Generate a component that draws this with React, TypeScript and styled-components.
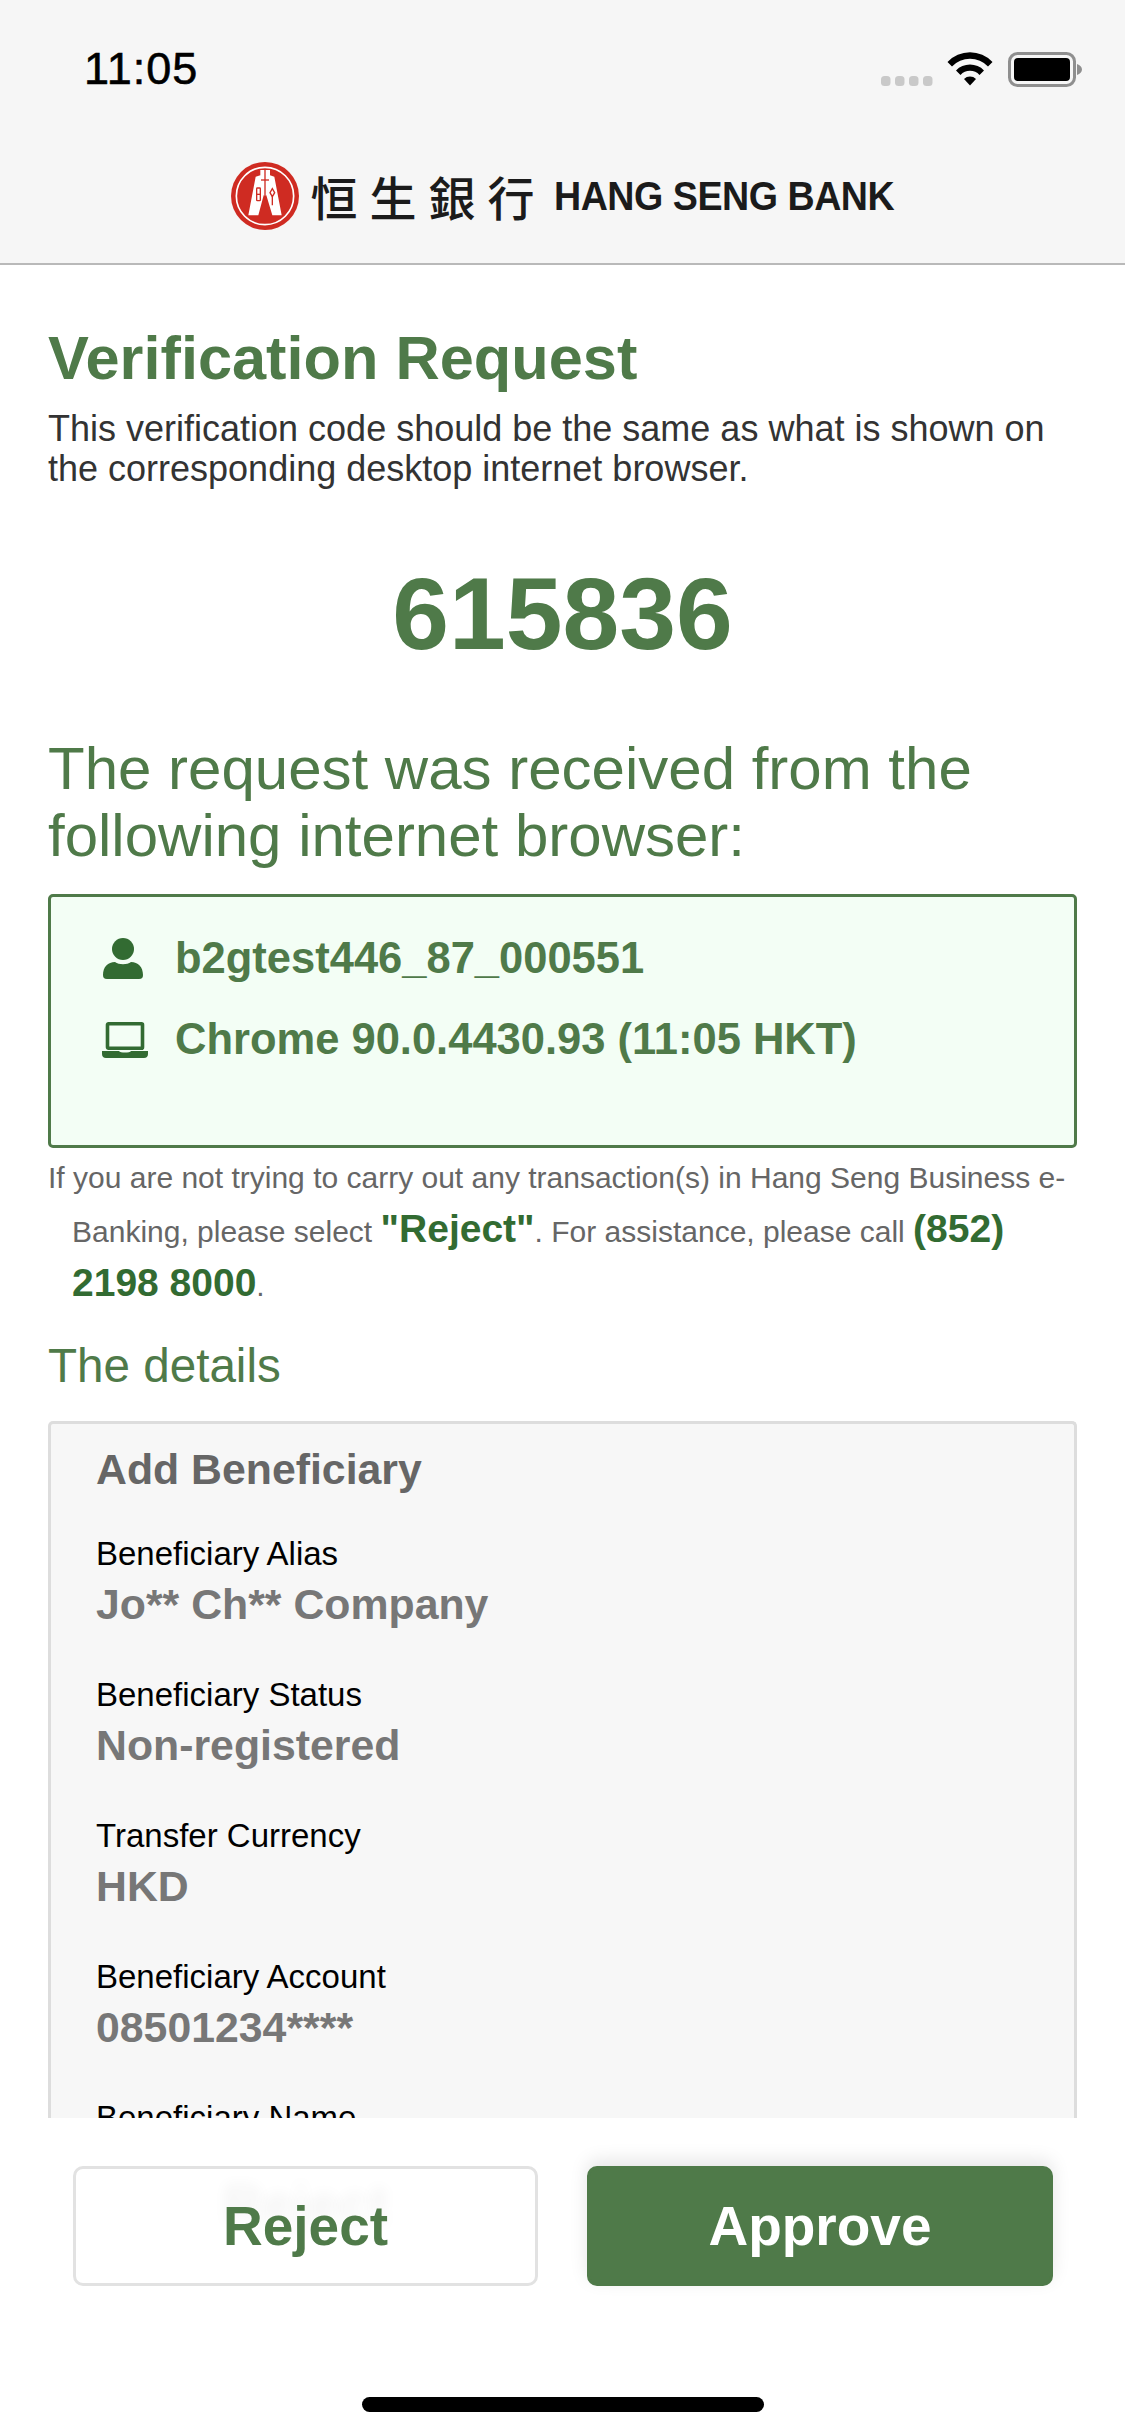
import { createGlobalStyle } from 'styled-components'
import styled from 'styled-components'

const GREEN = '#4f7a49'
const DARK_GREEN = '#326b32'

const GlobalStyle = createGlobalStyle`
  html, body {
    margin: 0;
    padding: 0;
    background: #fff;
  }
  * {
    box-sizing: border-box;
  }
`

const Page = styled.div`
  width: 1125px;
  height: 2436px;
  display: flex;
  flex-direction: column;
  overflow: hidden;
  background: #fff;
  font-family: 'Liberation Sans', Arial, sans-serif;
`

const TopBar = styled.header`
  height: 265px;
  flex: none;
  display: flex;
  flex-direction: column;
  background: #f6f6f6;
  border-bottom: 2px solid #b9b9b9;
`

const StatusBar = styled.div`
  height: 162px;
  flex: none;
  display: flex;
  justify-content: space-between;
  align-items: flex-start;
  padding: 43px 43px 0 84px;
`

const Clock = styled.div`
  font-size: 45px;
  line-height: 52px;
  font-weight: 400;
  letter-spacing: 1px;
  color: #000;
  -webkit-text-stroke: 0.6px #000;
`

const StatusIcons = styled.div`
  display: flex;
  align-items: flex-start;
  margin-top: 9px;
`

const Brand = styled.div`
  display: flex;
  align-items: center;
  justify-content: center;
`

const BrandChinese = styled.span`
  margin-left: 12px;
  font-family: 'Noto Sans CJK TC', 'Noto Sans CJK SC', sans-serif;
  font-size: 47px;
  line-height: 60px;
  font-weight: 500;
  letter-spacing: 12px;
  color: #1b1b1b;
`

const BrandLatin = styled.span`
  margin-left: 7px;
  margin-right: -21px;
  font-size: 40px;
  line-height: 60px;
  font-weight: 700;
  color: #1b1b1b;
  letter-spacing: -0.5px;
  white-space: nowrap;
  transform: scaleX(0.94);
  transform-origin: left center;
`

const Content = styled.main`
  flex: 1;
  min-height: 0;
  overflow: hidden;
  padding: 0 48px;
`

const Title = styled.h1`
  margin: 60px 0 0;
  font-size: 61.3px;
  line-height: 66px;
  font-weight: 700;
  color: ${GREEN};
`

const Intro = styled.p`
  margin: 18px 0 0;
  font-size: 36px;
  line-height: 40px;
  color: #333;
`

const Code = styled.div`
  margin-top: 67px;
  text-align: center;
  font-size: 102px;
  line-height: 116px;
  font-weight: 700;
  color: ${GREEN};
`

const RequestHeading = styled.h2`
  margin: 63px 0 0;
  font-size: 60px;
  line-height: 67px;
  font-weight: 400;
  color: ${GREEN};
`

const BrowserBox = styled.div`
  margin-top: 25px;
  height: 254px;
  padding: 38px 0 0 51px;
  display: flex;
  flex-direction: column;
  gap: 34px;
  background: #f3fef5;
  border: 3px solid ${GREEN};
  border-radius: 5px;
`

const BrowserRow = styled.div`
  display: flex;
  align-items: center;
  height: 47px;
`

const RowIcon = styled.span`
  width: 73px;
  flex: none;
  display: flex;
  align-items: center;
`

const RowText = styled.span`
  font-size: 43.5px;
  line-height: 47px;
  font-weight: 700;
  color: ${GREEN};
  white-space: nowrap;
`

const Notice = styled.p`
  margin: 4px 0 0;
  padding-left: 24px;
  text-indent: -24px;
  font-size: 30px;
  line-height: 51px;
  color: #666;
`

const NoticeStrong = styled.strong`
  font-size: 39px;
  font-weight: 700;
  color: ${DARK_GREEN};
`

const SectionHeading = styled.h3`
  margin: 27px 0 0;
  font-size: 47.6px;
  line-height: 56px;
  font-weight: 400;
  color: ${GREEN};
`

const DetailsPanel = styled.section`
  margin-top: 27px;
  padding: 19px 45px 0;
  background: #f7f7f7;
  border: 3px solid #ddd;
  border-bottom: none;
  border-radius: 5px 5px 0 0;
`

const PanelTitle = styled.div`
  padding-bottom: 13px;
  font-size: 42.8px;
  line-height: 52px;
  font-weight: 700;
  color: #666;
`

const Field = styled.div`
  margin-top: 25px;
  height: 116px;
`

const FieldLabel = styled.div`
  font-size: 33px;
  line-height: 42px;
  color: #000;
`

const FieldValue = styled.div`
  margin-top: 4px;
  font-size: 42.8px;
  line-height: 50px;
  font-weight: 700;
  color: #777;
`

const Footer = styled.footer`
  height: 318px;
  flex: none;
  position: relative;
  padding: 48px 72px 0 73px;
  display: grid;
  grid-template-columns: 465px 466px;
  grid-auto-rows: 120px;
  justify-content: space-between;
  background: #fff;
`

const Button = styled.button<{ $primary?: boolean }>`
  font-family: inherit;
  font-size: 55px;
  font-weight: 700;
  border-radius: 10px;
  padding: 0;
  color: ${(p) => (p.$primary ? '#fff' : GREEN)};
  background: ${(p) => (p.$primary ? GREEN : '#fff')};
  border: 3px solid ${(p) => (p.$primary ? GREEN : '#e2e2e2')};
  box-shadow: ${(p) => (p.$primary ? '0 -6px 18px rgba(0, 0, 0, 0.1)' : 'none')};
  text-shadow: ${(p) => (p.$primary ? 'none' : '0 -22px 14px rgba(0, 0, 0, 0.05)')};
`

const HomeBar = styled.div`
  position: absolute;
  left: 362px;
  bottom: 24px;
  width: 402px;
  height: 15px;
  border-radius: 8px;
  background: #000;
`

const details = [
  { label: 'Beneficiary Alias', value: 'Jo** Ch** Company' },
  { label: 'Beneficiary Status', value: 'Non-registered' },
  { label: 'Transfer Currency', value: 'HKD' },
  { label: 'Beneficiary Account', value: '08501234****' },
  { label: 'Beneficiary Name' },
]

function SignalDots() {
  return (
    <svg width="52" height="10" viewBox="0 0 52 10" style={{ marginTop: 24 }}>
      <g fill="#c9c9c9">
        <rect x="0" y="0" width="9.5" height="10" rx="3.5" />
        <rect x="14" y="0" width="9.5" height="10" rx="3.5" />
        <rect x="28" y="0" width="9.5" height="10" rx="3.5" />
        <rect x="42" y="0" width="9.5" height="10" rx="3.5" />
      </g>
    </svg>
  )
}

function WifiIcon() {
  return (
    <svg width="46" height="34" viewBox="0 0 46 34" style={{ margin: '0 0 0 14px' }}>
      <path d="M0.5 10 A31 31 0 0 1 45.5 10 L41 14.5 A25 25 0 0 0 5 14.5 Z" fill="#000" />
      <path d="M9 18.5 A19.5 19.5 0 0 1 37 18.5 L32.5 23 A13 13 0 0 0 13.5 23 Z" fill="#000" />
      <path d="M17 27 A8.5 8.5 0 0 1 29 27 L23 33.5 Z" fill="#000" />
    </svg>
  )
}

function BatteryIcon() {
  return (
    <svg width="74" height="36" viewBox="0 0 74 36" style={{ marginLeft: 15 }}>
      <rect x="1.5" y="1.5" width="65" height="32" rx="8" fill="none" stroke="#8f8f8f" strokeWidth="3" />
      <rect x="6" y="6" width="56" height="23" rx="4" fill="#000" />
      <path d="M69 12 C72 13 74 15 74 17.5 C74 20 72 22 69 23 Z" fill="#8f8f8f" />
    </svg>
  )
}

function BankLogo() {
  return (
    <svg width="68" height="68" viewBox="18 18 204 204">
      <circle cx="120" cy="120" r="102" fill="#cf2b22" />
      <circle cx="120" cy="120" r="86" fill="none" stroke="#fff" strokeWidth="5" />
      <path d="M106 42 H135 V58 L148 62 L170 178 H142 L124 118 H116 L100 178 H70 L92 62 L106 58 Z" fill="#fff" />
      <g stroke="#cf2b22" strokeWidth="4" fill="none">
        <path d="M120 42 V118" />
        <path d="M108 72 H132" />
        <rect x="95" y="96" width="11" height="38" rx="2" />
        <path d="M95 115 H106" />
        <path d="M142 118 V148" />
        <path d="M142 98 L149 110 L142 122 L135 110 Z" />
      </g>
    </svg>
  )
}

function PersonIcon() {
  return (
    <svg width="42" height="41" viewBox="0 0 42 41">
      <ellipse cx="21" cy="11" rx="11" ry="11" fill={DARK_GREEN} />
      <path d="M1 37 C1 29 6 24 13 24 C17 27 25 27 29 24 C36 24 41 29 41 37 C41 39.5 40 41 37 41 H5 C2 41 1 39.5 1 37 Z" fill={DARK_GREEN} />
    </svg>
  )
}

function LaptopIcon() {
  return (
    <svg width="46" height="36" viewBox="0 0 46 36">
      <rect x="5.5" y="1.8" width="35" height="24.5" rx="1" fill="none" stroke={DARK_GREEN} strokeWidth="3.6" />
      <path d="M0 29 H17 C18 31 28 31 29 29 H46 V32 C46 34.5 44.5 36 42 36 H4 C1.5 36 0 34.5 0 32 Z" fill={DARK_GREEN} />
    </svg>
  )
}

export default function App() {
  return (
    <Page>
      <GlobalStyle />
      <TopBar>
        <StatusBar>
          <Clock>11:05</Clock>
          <StatusIcons>
            <SignalDots />
            <WifiIcon />
            <BatteryIcon />
          </StatusIcons>
        </StatusBar>
        <Brand>
          <BankLogo />
          <BrandChinese>恒生銀行</BrandChinese>
          <BrandLatin>HANG SENG BANK</BrandLatin>
        </Brand>
      </TopBar>
      <Content>
        <Title>Verification Request</Title>
        <Intro>
          This verification code should be the same as what is shown on the corresponding desktop
          internet browser.
        </Intro>
        <Code>615836</Code>
        <RequestHeading>The request was received from the following internet browser:</RequestHeading>
        <BrowserBox>
          <BrowserRow>
            <RowIcon>
              <PersonIcon />
            </RowIcon>
            <RowText>b2gtest446_87_000551</RowText>
          </BrowserRow>
          <BrowserRow>
            <RowIcon>
              <LaptopIcon />
            </RowIcon>
            <RowText>Chrome 90.0.4430.93 (11:05 HKT)</RowText>
          </BrowserRow>
        </BrowserBox>
        <Notice>
          If you are not trying to carry out any transaction(s) in Hang Seng Business e-Banking,
          please select <NoticeStrong>"Reject"</NoticeStrong>. For assistance, please call{' '}
          <NoticeStrong>(852) 2198 8000</NoticeStrong>.
        </Notice>
        <SectionHeading>The details</SectionHeading>
        <DetailsPanel>
          <PanelTitle>Add Beneficiary</PanelTitle>
          {details.map((d) => (
            <Field key={d.label}>
              <FieldLabel>{d.label}</FieldLabel>
              {d.value && <FieldValue>{d.value}</FieldValue>}
            </Field>
          ))}
        </DetailsPanel>
      </Content>
      <Footer>
        <Button>Reject</Button>
        <Button $primary>Approve</Button>
        <HomeBar />
      </Footer>
    </Page>
  )
}
